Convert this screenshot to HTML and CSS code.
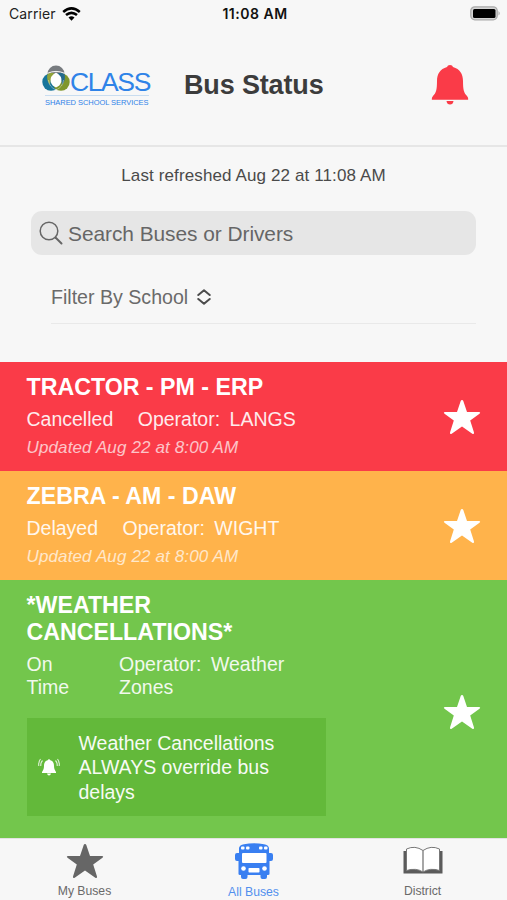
FILE: index.html
```html
<!DOCTYPE html>
<html lang="en">
<head>
<meta charset="utf-8">
<title>Bus Status</title>
<link rel="stylesheet" href="styles.css">
</head>
<body>
<svg class="symbols" width="0" height="0">
  <symbol id="star" viewBox="0 0 38 36"><path d="M19 1 Q20 1 20.3 2 L24 13 H36 Q38 13.2 36.5 14.7 L27.200 21.500 L31 33.500 Q31.200 35.800 29.300 34.800 L19 27.500 L8.700 34.800 Q6.800 35.800 7 33.500 L10.800 21.500 L1.500 14.700 Q0 13.200 2 13 H14 L17.700 2 Q18 1 19 1Z"/></symbol>
</svg>
<div class="app">
  <div class="status">
    <div class="carrier"><span>Carrier</span>
      <svg width="19" height="14" viewBox="0 0 19 14" fill="none" stroke="#000" stroke-width="2.600"><path d="M1.200 4.900 Q9.500 -2 17.800 4.900"/><path d="M4 8.100 Q9.500 3.500 15 8.100"/><path d="M6.500 10.600 Q9.500 7.800 12.500 10.600 L9.500 13.700Z" fill="#000" stroke="none"/></svg>
    </div>
    <span class="time">11:08 AM</span>
    <svg class="battery" width="31" height="15" viewBox="0 0 31 15"><rect x=".8" y=".8" width="26.400" height="13" rx="4" fill="#d5d5d5" stroke="#aaa" stroke-width="1.300"/><rect x="3" y="3" width="22.500" height="9" rx="1.500"/><path d="M28.500 5 Q31 7.300 28.500 9.600Z" fill="#aaa"/></svg>
  </div>
  <header class="header">
    <div class="logo">
      <div class="logo-top">
        <svg width="28" height="27" viewBox="0 0 28 27">
          <circle cx="14" cy="9" r="8.500" fill="#777b7f"/>
          <circle cx="9" cy="17" r="8.700" fill="#17759b"/>
          <circle cx="19" cy="17" r="8.700" fill="#7f972d"/>
          <path d="M5.500 9 Q10 6.500 14 9.500 Q8 12 8 20 Q4 15 5.500 9Z" fill="#91a33b"/>
          <path d="M22.500 9 Q18 6.500 14 9.500 Q20 12 20 20 Q24 15 22.500 9Z" fill="#246b8d"/>
          <path d="M5.500 8.300 Q14 4.500 22.500 8.300" fill="none" stroke="#f7f7f7" stroke-width="1"/>
          <path d="M14 25 Q7 22 6.500 15 M14 25 Q21 22 21.500 15" fill="none" stroke="#f7f7f7" stroke-opacity=".6" stroke-width=".7"/>
          <path d="M14 7.500 Q20.500 11 19.300 17 Q18 21 14 22.500 Q10 21 8.700 17 Q7.500 11 14 7.500Z" fill="#fff"/>
        </svg>
        <span class="logo-name">CLASS</span>
      </div>
      <div class="logo-sub">SHARED SCHOOL SERVICES</div>
    </div>
    <h1 class="title">Bus Status</h1>
    <svg class="bell" width="38" height="40" viewBox="0 0 38 40" fill="#fa3b48"><path d="M19 0 Q21.500 0 22 2 C29 4 32 9 32 16 C32 25 33 28 36 31 Q37.500 32.500 37.200 34.800 H.8 Q.5 32.500 2 31 C5 28 6 25 6 16 C6 9 9 4 16 2 Q16.500 0 19 0Z"/><path d="M15.500 36 H22.500 Q22 39.500 19 39.500 Q16 39.500 15.500 36Z"/></svg>
  </header>
  <div class="tools">
    <div class="refreshed">Last refreshed Aug 22 at 11:08 AM</div>
    <div class="search">
      <svg width="24" height="24" viewBox="0 0 24 24" fill="none" stroke="#666" stroke-width="1.500" stroke-linecap="round"><circle cx="10" cy="10" r="8.800"/><path d="M16.500 16.500 L22.500 22.500" stroke-width="2"/></svg>
      <span>Search Buses or Drivers</span>
    </div>
    <div class="filter"><span>Filter By School</span>
      <svg width="14" height="16" viewBox="0 0 14 16" fill="none" stroke="#4c4c4c" stroke-width="2" stroke-linecap="round" stroke-linejoin="round"><path d="M1.300 6 L7 1.300 L12.700 6 M1.300 10 L7 14.700 L12.700 10"/></svg>
    </div>
  </div>
  <main>
    <section class="bus cancelled">
      <div class="info">
        <h2>TRACTOR - PM - ERP</h2>
        <div class="detail"><span>Cancelled</span><span>Operator:&nbsp; LANGS</span></div>
        <div class="updated">Updated Aug 22 at 8:00 AM</div>
      </div>
      <svg class="star"><use href="#star"/></svg>
    </section>
    <section class="bus delayed">
      <div class="info">
        <h2>ZEBRA - AM - DAW</h2>
        <div class="detail"><span>Delayed</span><span>Operator:&nbsp; WIGHT</span></div>
        <div class="updated">Updated Aug 22 at 8:00 AM</div>
      </div>
      <svg class="star"><use href="#star"/></svg>
    </section>
    <section class="bus ontime">
      <div class="info">
        <h2>*WEATHER<br>CANCELLATIONS*</h2>
        <div class="detail wrapped"><span>On<br>Time</span><span>Operator:&nbsp; Weather<br>Zones</span></div>
        <div class="note">
          <svg width="22" height="18" viewBox="0 0 22 18" fill="#fff"><path d="M11 1.300 Q12 1.300 12.300 2.300 C15 3 16 5 16 8 C16 11 17 12.500 18 14 V15 H4 V14 C5 12.500 6 11 6 8 C6 5 7 3 9.700 2.300 Q10 1.300 11 1.300Z M9 15.500 H13 Q12.500 17.500 11 17.500 Q9.500 17.500 9 15.500Z"/><path d="M4.500 2.500 Q2.500 4.500 2.800 8 M2.500 1 Q.2 4 .8 8 M17.500 2.500 Q19.500 4.500 19.200 8 M19.500 1 Q21.800 4 21.200 8" fill="none" stroke="#fff" stroke-opacity=".8" stroke-width="1.100"/></svg>
          <p>Weather Cancellations<br>ALWAYS override bus<br>delays</p>
        </div>
      </div>
      <svg class="star"><use href="#star"/></svg>
    </section>
  </main>
  <nav class="tabs">
    <a class="tab"><svg class="tab-star"><use href="#star"/></svg><span>My Buses</span></a>
    <a class="tab active">
      <svg width="38" height="36" viewBox="0 0 38 36" fill="#397ff1"><path d="M4 5 Q4.500 2 9 1.200 Q19 -.8 29 1.200 Q33.500 2 34 5 V10 H36 Q38 10 38 12 V16 Q38 18 36 18 H34.500 V31 Q34.500 32 33 32 H32 V34 Q32 36 30 36 H27.500 Q25.500 36 25.500 34 V32 H12.500 V34 Q12.500 36 10.500 36 H8 Q6 36 6 34 V32 H5 Q3.500 32 3.500 31 V18 H2 Q0 18 0 16 V12 Q0 10 2 10 H4Z"/><g fill="#fff"><rect x="7" y="10" width="24.500" height="10" rx="1"/><rect x="6" y="3.500" width="3.500" height="3" rx="1"/><rect x="11" y="3.500" width="3.500" height="3" rx="1"/><rect x="24" y="3.500" width="3.500" height="3" rx="1"/><rect x="29" y="3.500" width="3.500" height="3" rx="1"/><circle cx="8.500" cy="25.500" r="2.300"/><circle cx="29.500" cy="25.500" r="2.300"/><rect x="13.500" y="25" width="11" height="4.500" rx=".8"/></g></svg>
      <span>All Buses</span></a>
    <a class="tab">
      <svg width="40" height="36" viewBox="0 0 40 36"><path d="M.5 8 H39.500 V30.500 H.5Z" fill="#5b5b5b"/><path d="M3.500 6 Q12 2 20 7.500 Q28 2 36.500 6 V27.500 Q27 24.500 20 29 Q13 24.500 3.500 27.500Z" fill="#fff" stroke="#777" stroke-width="1"/><path d="M20 7.500 V29" stroke="#777" stroke-width="1.300"/></svg>
      <span>District</span></a>
  </nav>
</div>
</body>
</html>
```
FILE: styles.css
```css
* { box-sizing: border-box; }
body { margin: 0; background: #f7f7f7; font-family: "Liberation Sans", Arial, sans-serif; color: #4a4a4a; }
h1, h2, p { margin: 0; }
svg { display: block; flex: none; }
.symbols { display: none; }
.app { height: 900px; display: flex; flex-direction: column; overflow: hidden; white-space: nowrap; }
.status { height: 27px; display: grid; grid-template-columns: 1fr auto 1fr; align-items: center; padding: 0 6px 0 9px; font-family: Inter, sans-serif; font-size: 14px; color: #222; }
.carrier { display: flex; align-items: center; gap: 6px; letter-spacing: .1px; }
.time { font-weight: 600; color: #111; letter-spacing: .5px; }
.battery { justify-self: end; }
.header { height: 120px; border-bottom: 2px solid #e6e6e6; display: flex; padding: 0 38px 0 42px; }
.logo { width: 142px; padding-top: 38px; color: #2f83e8; }
.logo-top { display: flex; height: 30px; width: 108px; }
.logo-name { font-size: 26.500px; line-height: 35px; letter-spacing: -1.400px; }
.logo-sub { margin-left: 3px; width: 104px; border-top: 1px solid #c9ddf0; font-size: 7.500px; line-height: 14px; letter-spacing: -.05px; }
.title { flex: 1; padding-top: 42px; font-size: 27px; line-height: 32px; letter-spacing: -.15px; color: #3c3c3c; }
.bell { margin-top: 38px; }
.tools { height: 214.500px; padding: 18px 31px 0; }
.refreshed { text-align: center; font-size: 17px; line-height: 22px; letter-spacing: .12px; }
.search { margin-top: 24px; height: 44px; border-radius: 11px; background: #e6e6e6; display: flex; align-items: center; gap: 5px; padding-left: 8px; font-size: 20.900px; letter-spacing: -.05px; color: #666; }
.search span { padding-top: 2px; }
.filter { margin-left: 20px; height: 69px; border-bottom: 1.500px solid #e9e9e9; padding-top: 30px; display: flex; gap: 9px; font-size: 19.600px; line-height: 24px; color: #6a6a6a; }
.filter svg { margin-top: 4px; }
.bus { height: 109px; display: flex; align-items: center; justify-content: space-between; padding: 1px 26px 0 26.500px; color: #fff; }
.cancelled { background: #fa3b48; }
.delayed { background: #ffb34b; }
.ontime { background: #73c64c; height: 258px; }
.ontime .star { margin-top: 5px; }
.info { align-self: flex-start; padding-top: 11px; }
h2 { font-size: 23.200px; line-height: 27px; }
.detail { display: flex; gap: 24.500px; font-size: 19.500px; line-height: 23.300px; padding-top: 7px; word-spacing: -.7px; opacity: .9; }
.wrapped { gap: 50px; }
.updated { font-size: 17px; font-style: italic; line-height: 20px; padding-top: 7px; letter-spacing: .13px; opacity: .7; }
.star { width: 38px; height: 36px; fill: #fff; }
.note { margin-top: 19px; width: 299.500px; height: 98px; background: #63b93a; display: flex; align-items: center; padding-left: 11px; gap: 19px; }
.note p { font-size: 19.500px; line-height: 24.300px; opacity: .95; padding-top: 1px; }
.tabs { flex: 1; display: grid; grid-template-columns: repeat(3, 1fr); border-top: 1px solid #e3e3e3; padding-top: 4px; }
.tab { display: flex; flex-direction: column; align-items: center; gap: 4px; font-size: 12.200px; line-height: 16px; color: #6a6a6a; }
.tab-star { width: 38px; height: 36px; fill: #666; }
.active { color: #5290ee; gap: 5px; }
```
